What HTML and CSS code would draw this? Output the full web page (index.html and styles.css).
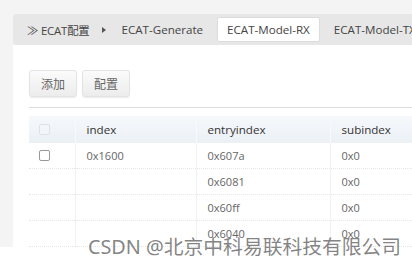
FILE: index.html
```html
<!DOCTYPE html>
<html lang="zh">
<head>
<meta charset="utf-8">
<link rel="stylesheet" href="styles.css">
</head>
<body>
<div class="page">
  <div class="crumbs">
    <span class="home">≫ ECAT配置</span>
    <span class="arrow"></span>
    <span class="tab">ECAT-Generate</span>
    <span class="tab active">ECAT-Model-RX</span>
    <span class="tab">ECAT-Model-TX</span>
  </div>
  <div class="panel">
    <div class="toolbar">
      <button class="btn">添加</button>
      <button class="btn">配置</button>
    </div>
    <div class="rule"></div>
    <table class="grid">
      <thead>
        <tr>
          <th class="cb"><span class="box faded"></span></th>
          <th class="c1">index</th>
          <th class="c2">entryindex</th>
          <th class="c3">subindex</th>
        </tr>
      </thead>
      <tbody>
        <tr><td class="cb"><span class="box"></span></td><td>0x1600</td><td>0x607a</td><td>0x0</td></tr>
        <tr><td class="cb"></td><td></td><td>0x6081</td><td>0x0</td></tr>
        <tr><td class="cb"></td><td></td><td>0x60ff</td><td>0x0</td></tr>
        <tr><td class="cb"></td><td></td><td>0x6040</td><td>0x0</td></tr>
      </tbody>
    </table>
  </div>
</div>
<div class="watermark">CSDN @北京中科易联科技有限公司</div>
</body>
</html>
```
FILE: styles.css
```css
html, body {
  margin: 0;
  padding: 0;
  background: #ffffff;
  font-family: "Open Sans", "Noto Sans CJK SC", sans-serif;
}
body {
  width: 412px;
  height: 265px;
  overflow: hidden;
  position: relative;
}
.page {
  height: 247px;
  background: #f4f4f4;
  padding: 14px 0 0 13px;
  box-sizing: border-box;
  display: flex;
  flex-direction: column;
  overflow: hidden;
}
.crumbs {
  height: 31px;
  flex: none;
  background: #e7e7e7;
  border-radius: 4px 0 0 4px;
  display: flex;
  align-items: center;
  gap: 4px;
  white-space: nowrap;
  overflow: hidden;
  font-size: 11.6px;
  color: #444;
}
.home {
  padding-left: 14px;
  font-size: 11.4px;
  letter-spacing: -0.2px;
  color: #444;
}
.arrow {
  width: 0;
  height: 0;
  border-top: 3px solid transparent;
  border-bottom: 3px solid transparent;
  border-left: 4px solid #555;
  margin: 0 2px 0 8px;
}
.tab {
  height: 25px;
  line-height: 23px;
  padding: 0 9px;
  box-sizing: border-box;
  border: 1px solid transparent;
  border-radius: 2px;
  color: #444;
}
.tab.active {
  background: #ffffff;
  border-color: #dcdcdc;
}
.panel {
  flex: 1;
  background: #ffffff;
  padding: 25px 0 0 16px;
  overflow: hidden;
}
.toolbar {
  display: flex;
  gap: 5px;
}
.btn {
  width: 48px;
  height: 27px;
  border: 1px solid #e3e3e3;
  border-radius: 3px;
  background: linear-gradient(#fbfbfb, #ececec);
  box-shadow: 0 1px 1px rgba(0,0,0,0.08);
  font-family: "Noto Sans CJK SC", sans-serif;
  font-size: 12px;
  color: #666;
  padding: 0;
}
.rule {
  height: 1px;
  background: #dcdcdc;
  margin-top: 10px;
}
.grid {
  margin-top: 8px;
  border-collapse: collapse;
  table-layout: fixed;
  width: 420px;
  font-size: 11px;
}
.grid th {
  height: 27px;
  background: linear-gradient(#f6f8fb, #ebf0f5);
  text-align: left;
  font-weight: normal;
  font-size: 11.6px;
  color: #333;
  padding: 0 0 0 11px;
  border-right: 1px solid #f7f9fb;
}
.grid td {
  height: 25px;
  padding: 0 0 0 11px;
  color: #666;
  border-bottom: 1px dotted #e6e6e6;
  border-right: 1px solid #f1f1f1;
}
.grid .cb {
  width: 46px;
  box-sizing: border-box;
  padding-left: 10px;
}
.grid .c1 { width: 121px; box-sizing: border-box; }
.grid .c2 { width: 134px; box-sizing: border-box; }
.box {
  display: block;
  width: 9px;
  height: 9px;
  border: 1px solid #999;
  border-radius: 2px;
  background: #fff;
}
.box.faded {
  border-color: #dde2e8;
  background: #f3f5f8;
}
.watermark {
  position: absolute;
  left: 88px;
  top: 231px;
  font-family: "Noto Sans", "Noto Sans CJK SC", sans-serif;
  font-size: 19.8px;
  color: rgba(110,110,110,0.85);
  white-space: nowrap;
}
```
